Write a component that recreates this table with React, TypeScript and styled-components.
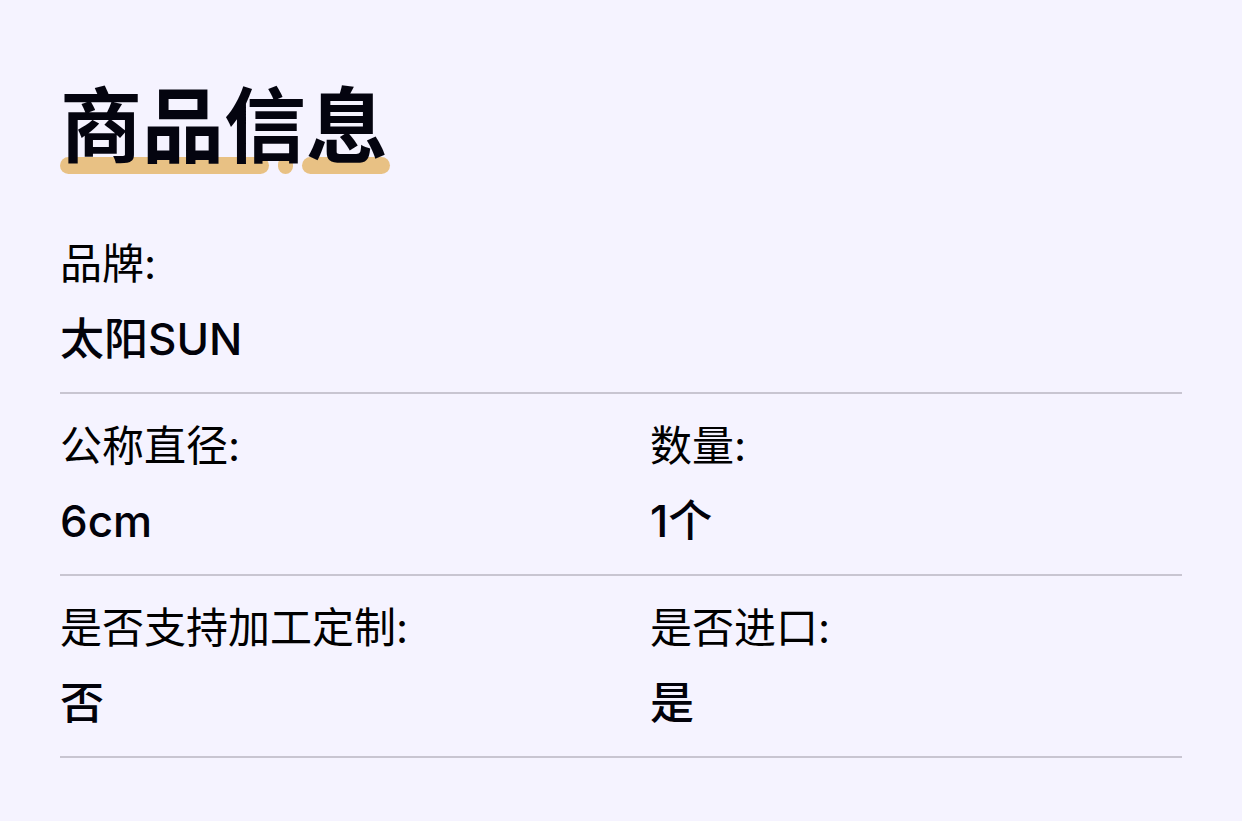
import React from "react";
import styled, { createGlobalStyle } from "styled-components";

const BG = "#f5f3ff";

const GlobalStyle = createGlobalStyle`
  html, body {
    margin: 0;
    padding: 0;
    background: ${BG};
  }
  body {
    font-family: Inter, "Noto Sans CJK SC", sans-serif;
    color: #000;
  }
`;

const Page = styled.div`
  min-height: 821px;
  box-sizing: border-box;
  padding: 72px 60px 60px;
  background: ${BG};
`;

const TitleWrap = styled.div`
  position: relative;
  width: fit-content;
  margin-bottom: 42px;
`;

const Title = styled.h1`
  position: relative;
  z-index: 1;
  margin: 0;
  font-family: "Noto Sans CJK SC", sans-serif;
  font-size: 82px;
  font-weight: 700;
  line-height: 1.2;
  color: #04040f;
`;

const Underline = styled.svg`
  position: absolute;
  left: 0;
  top: 85px;
  z-index: 0;
`;

const Row = styled.div<{ $cols: number }>`
  display: grid;
  grid-template-columns: repeat(${(p) => p.$cols}, 1fr);
  column-gap: 58px;
  padding: 25px 0 24px;
  border-bottom: 2px solid #c8c5d1;
`;

const Field = styled.div`
  display: flex;
  flex-direction: column;
  gap: 19px;
`;

const Label = styled.div`
  font-size: 42px;
  line-height: 1.3;
  font-weight: 400;
`;

const Value = styled.div`
  font-size: 44px;
  line-height: 1.3;
  font-weight: 500;
  color: #02020a;
`;

type Item = { label: string; value: string };

const rows: Item[][] = [
  [{ label: "品牌:", value: "太阳SUN" }],
  [
    { label: "公称直径:", value: "6cm" },
    { label: "数量:", value: "1个" },
  ],
  [
    { label: "是否支持加工定制:", value: "否" },
    { label: "是否进口:", value: "是" },
  ],
];

export default function App() {
  return (
    <>
      <GlobalStyle />
      <Page>
        <TitleWrap>
          <Title>商品信息</Title>
          <Underline width="331" height="17" viewBox="0 0 331 17" aria-hidden>
            <g fill="#e8c184">
              <rect x="0" y="0" width="209" height="17" rx="8.5" />
              <rect x="218" y="0" width="15" height="17" rx="7.5" />
              <rect x="242" y="0" width="88" height="17" rx="8.5" />
            </g>
          </Underline>
        </TitleWrap>
        {rows.map((row, i) => (
          <Row key={i} $cols={row.length}>
            {row.map((item) => (
              <Field key={item.label}>
                <Label>{item.label}</Label>
                <Value>{item.value}</Value>
              </Field>
            ))}
          </Row>
        ))}
      </Page>
    </>
  );
}
